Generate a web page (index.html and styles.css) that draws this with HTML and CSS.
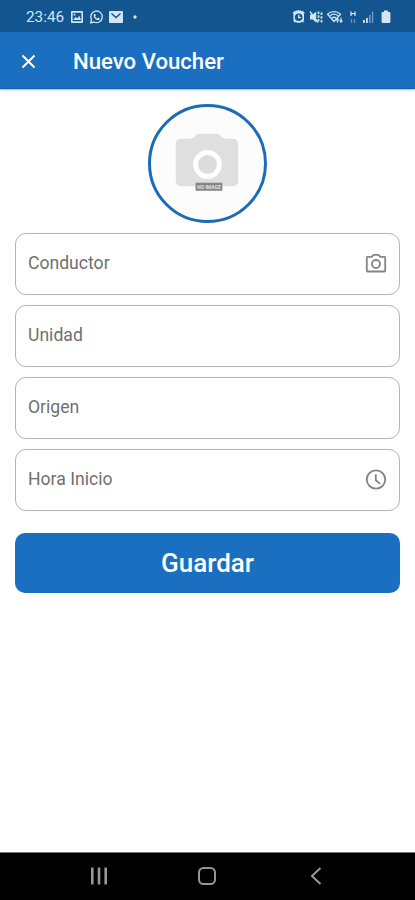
FILE: index.html
```html
<!DOCTYPE html>
<html lang="es">
<head>
<meta charset="utf-8">
<meta name="viewport" content="width=device-width, initial-scale=1">
<title>Nuevo Voucher</title>
<link rel="stylesheet" href="styles.css">
</head>
<body>
<div class="screen">
  <div class="status">
    <span class="time">23:46</span>
    <svg class="status-left" width="70" height="16" viewBox="0 0 70 16">
      <path fill-rule="evenodd" d="M2 2h10a1 1 0 0 1 1 1v10a1 1 0 0 1-1 1H2a1 1 0 0 1-1-1V3a1 1 0 0 1 1-1zM2.600 3.700v8.600h8.800V3.700zM3.200 11l2.300-3.200 1.700 1.800 2-2.800 1.800 4.200zM3.500 4.800h1.800v1.600H3.500z"/>
      <path class="line" d="M20.700 13.900l.8-3.200a5.800 5.800 0 1 1 2.400 2.300z"/>
      <path d="M24 5.200l1-.5.9 1.900-.7.9c.5 1 1.100 1.600 2.100 2l.8-.9 1.800.9c-.2 1.500-1.500 1.900-2.700 1.500-2.200-.8-4.200-3.400-3.200-5.800z"/>
      <path d="M40 2h12q1 0 1 1v10q0 1-1 1H40q-1 0-1-1V3q0-1 1-1z"/>
      <path class="flap" d="M41.500 4.500l4.500 4 4.500-4"/>
      <circle cx="65" cy="8" r="1.700"/>
    </svg>
    <svg class="status-right" width="100" height="16" viewBox="0 0 100 16">
      <path fill-rule="evenodd" d="M3 2.800a5.500 5.500 0 0 1 7.400 0l1.600 2v6l-.7 2.800-1.600-.7a6 6 0 0 1-6 0l-1.600.7-.7-2.800v-6zM6.700 4.400a3.800 3.800 0 1 0 0 7.600 3.800 3.800 0 0 0 0-7.600z"/>
      <path class="line" d="M1 4.200l2.400-2M12.400 4.200l-2.400-2M6.700 5.800v2.700h2.100"/>
      <path d="M18 5.500h2.700l3.500-3v11l-3.500-3H18z"/>
      <path class="line" d="M18 2.500l8 11"/>
      <path class="line dashed" d="M26.500 2.500v11M29.500 3.500v10"/>
      <path class="line" d="M35.500 5.200c3.700-3.400 9.300-3.400 13 0l-6.500 7.300zM38 6.700c2.300-1.800 5.700-1.800 8 0M40 9c1.300-1 2.700-1 4 0"/>
      <path class="line" d="M45.500 13.500V10M44.200 11.300l1.300-1.500 1.300 1.500M49 8.800v4M47.700 11.500l1.300 1.500 1.300-1.500"/>
      <path class="line" d="M59 2.500v4.500M63 2.500v4.500M59 4.700h4"/>
      <path class="line dim" d="M59.500 10v4M62.500 10v4"/>
      <path d="M71 11h1.800v3H71zM74 9h1.800v5H74z"/>
      <path class="faint" d="M77 6h1.600v8H77zM79.900 2.500h1.400V14h-1.400z"/>
      <path d="M92 1.500h4v1.600h1.400q1 0 1 1V13q0 1-1 1h-6.800q-1 0-1-1V4.100q0-1 1-1H92z"/>
    </svg>
  </div>
  <header class="bar">
    <svg class="close" width="16" height="16" viewBox="0 0 16 16"><path d="M1.500 2.500l12 12M13.500 2.500l-12 12"/></svg>
    <h1 class="title">Nuevo Voucher</h1>
  </header>
  <main class="content">
    <div class="photo">
      <svg width="113" height="113" viewBox="0 0 114 114">
        <path class="cam" d="M31 32h9q3 0 4-2l1-1q1-2 4-2h17q3 0 4 2l1 1q1 2 4 2h7q6 0 6 6v37q0 5-6 5H31q-6 0-6-5V38q0-6 6-6z"/>
        <circle class="lens" cx="57" cy="58" r="12"/>
        <path class="plate" d="M45 76.500h27v8H45z"/>
        <text class="no-image" x="58.500" y="82.300" text-anchor="middle">NO IMAGE</text>
      </svg>
    </div>
    <form class="form">
      <div class="field"><span>Conductor</span>
        <svg class="icon" width="22" height="22" viewBox="0 0 22 22"><path d="M2.500 4.900h4.200l1.800-2h5l1.800 2h4.200q.7 0 .7.700v13.200q0 .7-.7.700h-17q-.7 0-.7-.7V5.600q0-.7.700-.7z"/><circle cx="11" cy="12" r="4"/></svg>
      </div>
      <div class="field"><span>Unidad</span></div>
      <div class="field"><span>Origen</span></div>
      <div class="field"><span>Hora Inicio</span>
        <svg class="icon" width="22" height="22" viewBox="0 0 22 22"><circle cx="11" cy="11.500" r="9.200"/><path d="M10.800 6.300v6l4.300 3.600"/></svg>
      </div>
      <button class="save" type="button">Guardar</button>
    </form>
  </main>
  <nav class="nav">
    <svg width="18" height="20" viewBox="0 0 18 20"><path class="thick" d="M2.300 1.500v17M9 1.500v17M15.700 1.500v17"/></svg>
    <svg width="20" height="20" viewBox="0 0 20 20"><rect x="2" y="2" width="16" height="16" rx="4.500"/></svg>
    <svg width="12" height="20" viewBox="0 0 12 20"><path d="M10.500 2L2 10l8.500 8"/></svg>
  </nav>
</div>
</body>
</html>
```
FILE: styles.css
```css
* { box-sizing: border-box; }
body { margin: 0; background: #fff; font-family: Roboto, sans-serif; }
.screen { display: flex; flex-direction: column; width: 415px; height: 900px; overflow: hidden; }
.status {
  display: flex; align-items: center; flex: none;
  height: 32px; padding: 2px 23px 0 26px;
  background: #12558f; color: #d3e4f2;
}
.time { width: 44px; font-size: 15.300px; line-height: 20px; white-space: nowrap; }
.status svg { fill: #d3e4f2; }
.status .line { fill: none; stroke: #d3e4f2; stroke-width: 1.300; }
.status .flap { fill: none; stroke: #12558f; stroke-width: 1.500; }
.status .dashed { stroke-width: 1.800; stroke-dasharray: 2.500 1.300; }
.status .dim { stroke: #5e93c0; }
.status .faint { fill: #6b9cc6; }
.status-right { margin-left: auto; }
.bar {
  display: flex; align-items: center; flex: none;
  height: 57px; padding: 1px 21px 0;
  background: #1b6fc0; color: #fff;
  border-bottom: 1px solid #155fa8;
  box-shadow: 0 1px 2px rgba(0, 0, 0, .3);
}
.close { fill: none; stroke: #fff; stroke-width: 2; }
.title { margin: 1px 0 0 36px; font-size: 22.150px; font-weight: 500; line-height: 28px; white-space: nowrap; }
.content { flex: 1; padding: 15px 15px 0; }
.photo {
  width: 119px; height: 119px; margin: 0 auto;
  border: 3px solid #1c6bb5; border-radius: 50%;
  background: #fcfcfc; overflow: hidden;
}
.photo svg { display: block; }
.cam { fill: #dfdfdf; }
.lens { fill: #dcdcdc; stroke: #fff; stroke-width: 5; }
.plate { fill: #858585; }
.no-image { fill: #e2e2e2; font-size: 5px; font-weight: 700; }
.form { display: flex; flex-direction: column; gap: 10px; margin-top: 10px; }
.field {
  display: flex; align-items: center; justify-content: space-between;
  height: 62px; padding: 0 13px 2px 12px;
  border: 1px solid #b5b5b5; border-radius: 11px;
  color: #6f6f6f; font-size: 17.600px; line-height: 22px;
}
.icon { margin-right: -1px; fill: none; stroke: #858585; stroke-width: 1.800; }
.save {
  height: 60px; margin-top: 12px; padding: 0 0 1px;
  border: 0; border-radius: 10px;
  background: #1b6fc0; color: #fff;
  font: 500 26px/32px Roboto, sans-serif;
}
.nav {
  display: grid; grid-template-columns: 107px 113px 12px; align-items: center; flex: none;
  height: 48px; padding: 0 0 2px 90px;
  background: #000; border-top: 1px solid #777;
}
.nav svg { fill: none; stroke: #969696; stroke-width: 2; }
.nav .thick { stroke-width: 2.600; }
```
